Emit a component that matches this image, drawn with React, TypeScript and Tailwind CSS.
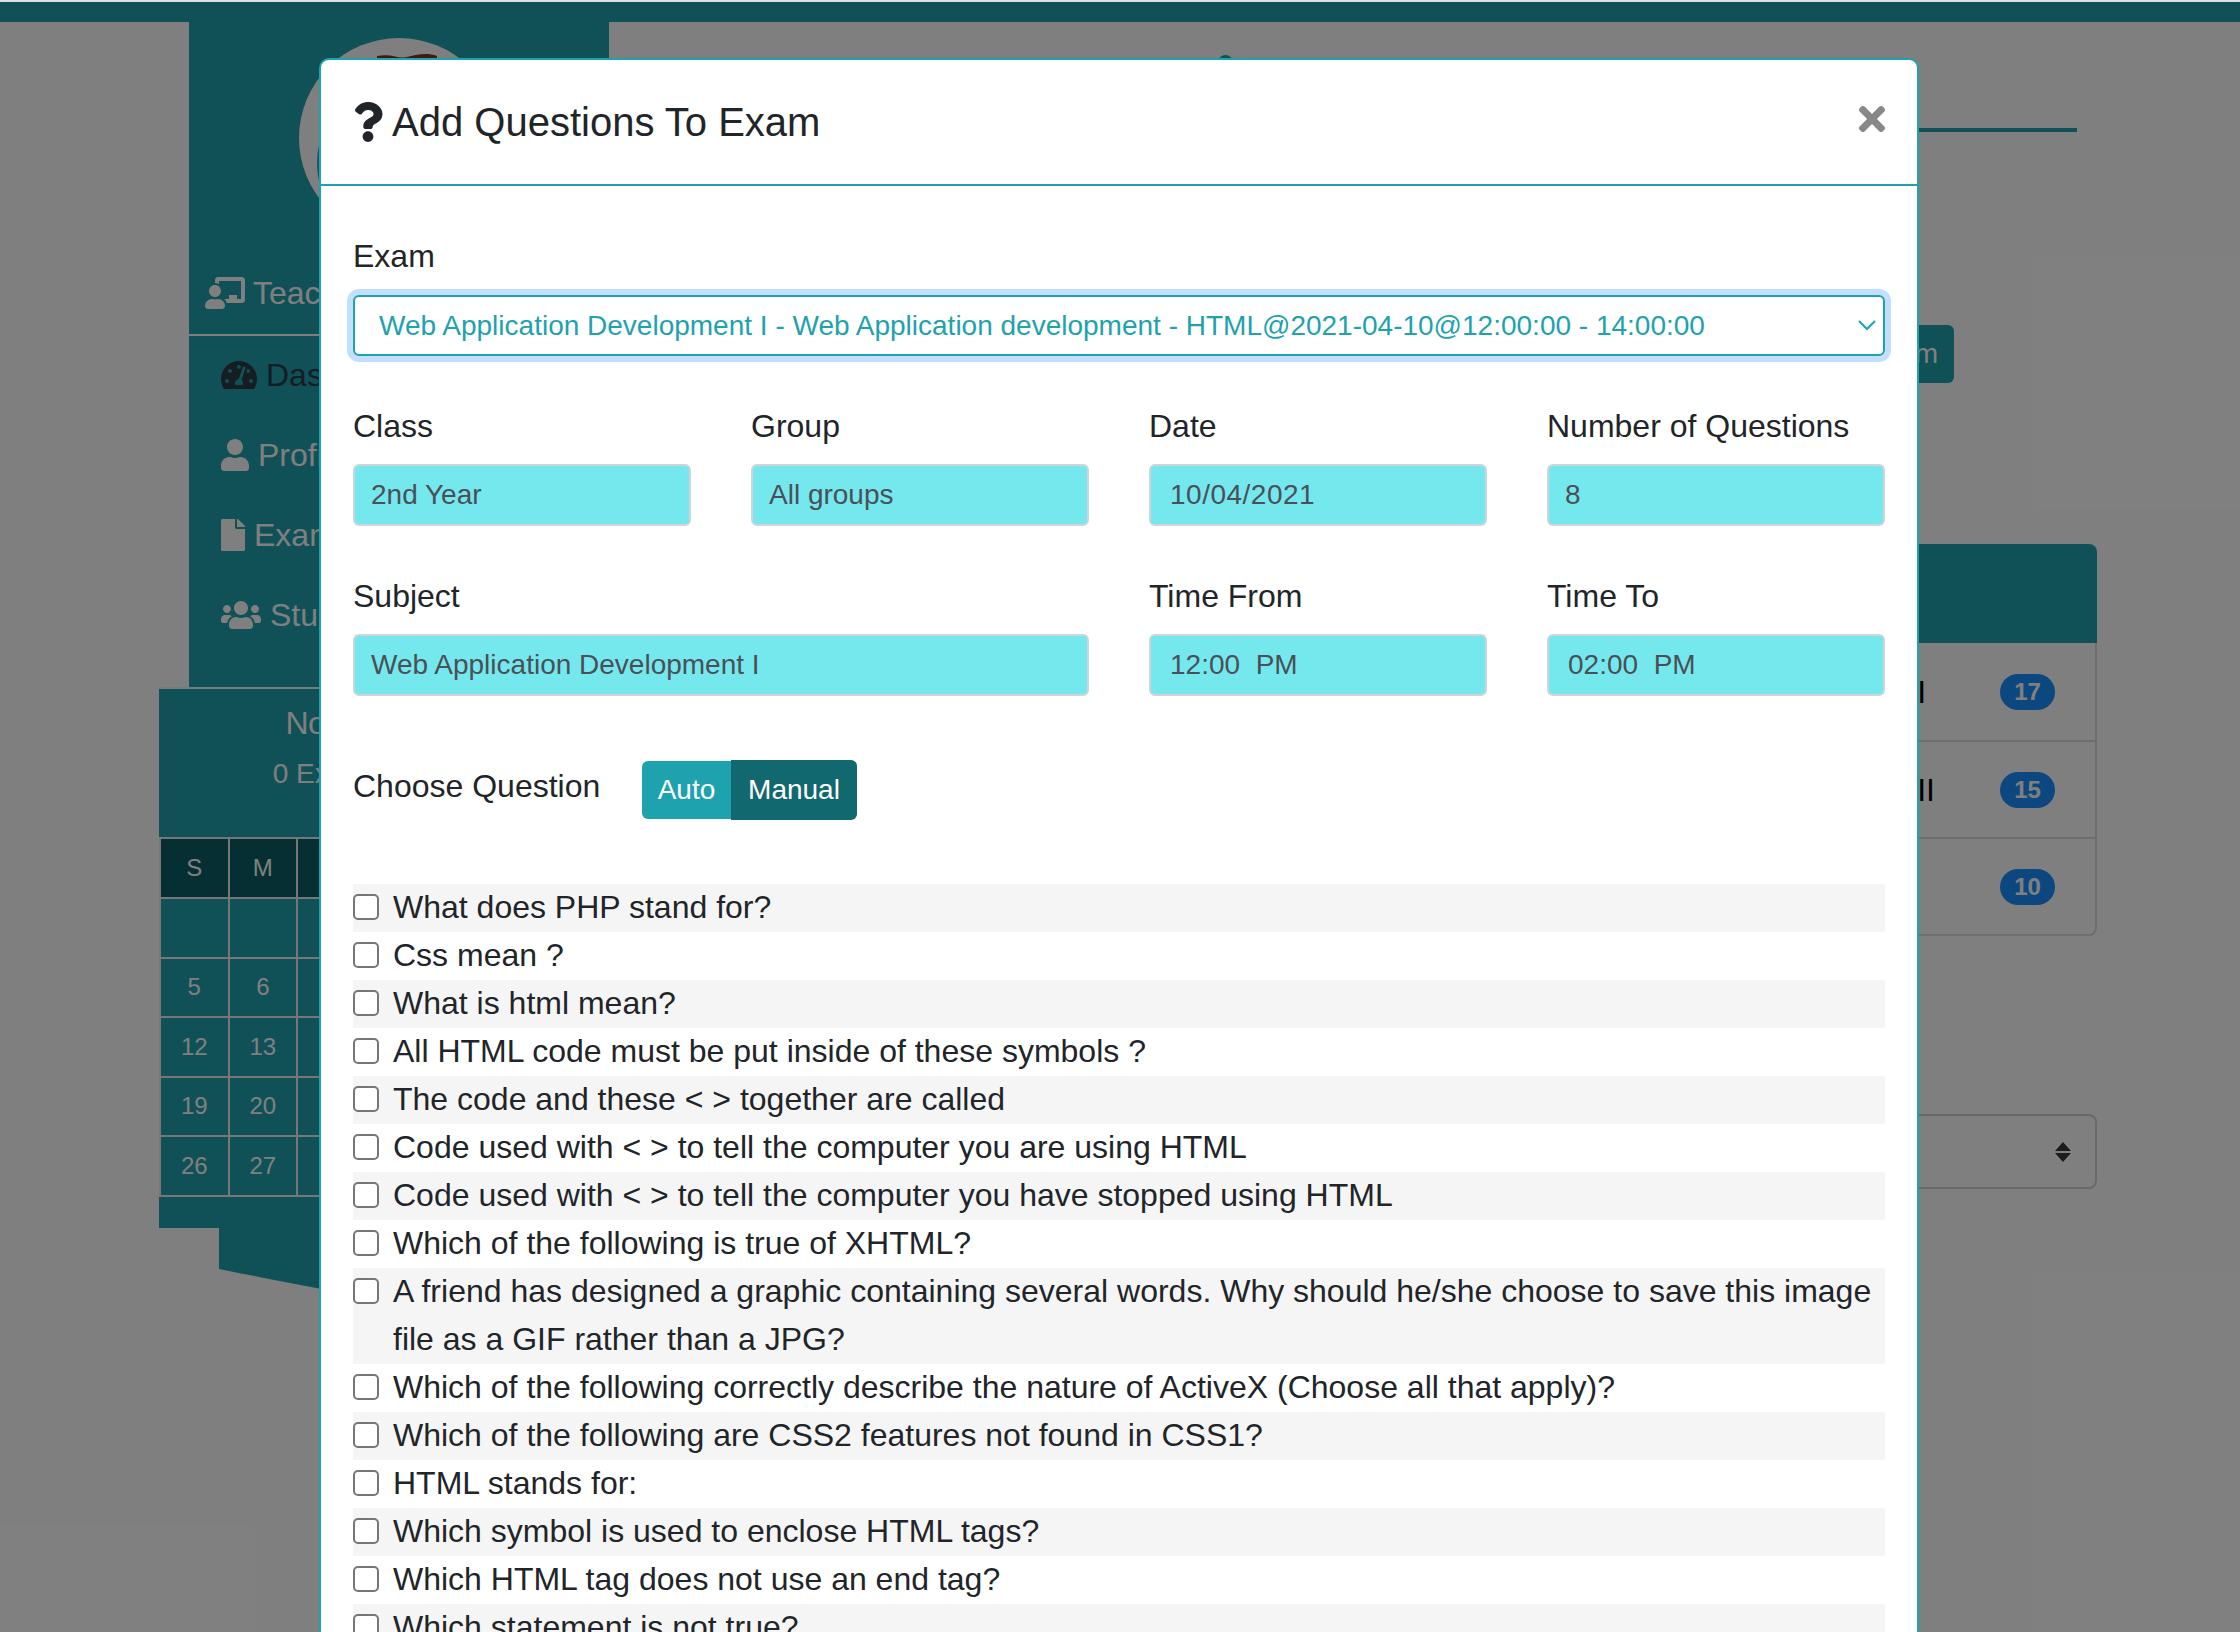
import { FaChalkboardTeacher, FaFile, FaQuestion, FaTachometerAlt, FaTimes, FaUser, FaUsers } from "react-icons/fa";

const navItems = [
  { label: "Dashboard", icon: <FaTachometerAlt className="w-[36px] h-[32px]" />, active: true },
  { label: "Profile", icon: <FaUser className="w-[28px] h-[32px]" /> },
  { label: "Exams", icon: <FaFile className="w-[24px] h-[32px]" /> },
  { label: "Students", icon: <FaUsers className="w-[40px] h-[32px]" /> },
];

const calendarRows = [
  ["", "", "", "", "1", "2", "3"],
  ["5", "6", "7", "8", "9", "10", "11"],
  ["12", "13", "14", "15", "16", "17", "18"],
  ["19", "20", "21", "22", "23", "24", "25"],
  ["26", "27", "28", "29", "30", "", ""],
];

const subjects = [
  { name: "Web Application Development I", count: 17 },
  { name: "Web Application Development II", count: 15 },
  { name: "Database", count: 10 },
];

const fieldsTop = [
  { label: "Class", value: "2nd Year" },
  { label: "Group", value: "All groups" },
  { label: "Date", value: "10/04/2021", inputClass: "pl-[19px] pr-[16px] tracking-[0.5px]" },
  { label: "Number of Questions", value: "8" },
];

const fieldsBottom = [
  { label: "Subject", value: "Web Application Development I", wide: true },
  { label: "Time From", value: "12:00  PM", inputClass: "pl-[19px] pr-[16px]" },
  { label: "Time To", value: "02:00  PM", inputClass: "pl-[19px] pr-[16px]" },
];

const questions = [
  "What does PHP stand for?",
  "Css mean ?",
  "What is html mean?",
  "All HTML code must be put inside of these symbols ?",
  "The code and these < > together are called",
  "Code used with < > to tell the computer you are using HTML",
  "Code used with < > to tell the computer you have stopped using HTML",
  "Which of the following is true of XHTML?",
  "A friend has designed a graphic containing several words. Why should he/she choose to save this image file as a GIF rather than a JPG?",
  "Which of the following correctly describe the nature of ActiveX (Choose all that apply)?",
  "Which of the following are CSS2 features not found in CSS1?",
  "HTML stands for:",
  "Which symbol is used to enclose HTML tags?",
  "Which HTML tag does not use an end tag?",
  "Which statement is not true?",
];

function Field({ label, value, wide, inputClass }: { label: string; value: string; wide?: boolean; inputClass?: string }) {
  return (
    <div className={wide ? "col-span-2" : ""}>
      <label className="block text-[32px] leading-[48px] mb-[14px] text-[#212529]">{label}</label>
      <input
        readOnly
        value={value}
        className={`block w-full h-[62px] text-[28px] whitespace-pre text-[#495057] bg-[#75e8ee] border-2 border-[#ced4da] rounded-[6px] outline-none ${
          inputClass ?? "px-[16px]"
        }`}
      />
    </div>
  );
}

function Sidebar() {
  return (
    <div className="w-[482px] shrink-0">
      <div className="ml-[30px] w-[420px] h-[665px] bg-[#1ea2ad] flex flex-col">
        <div className="pt-[16px] flex justify-center">
          <svg width="200" height="200" viewBox="0 0 200 200">
            <circle cx="100" cy="100" r="100" fill="#ffffff" />
            <circle cx="100" cy="125" r="82" fill="#4a9fd0" />
            <path d="M78 18c14-3 22 3 30 1s20-5 30-1v40H78z" fill="#7a3428" />
          </svg>
        </div>
        <div className="mt-[31px] h-[48px] pl-[16px] flex items-center gap-[8px] text-[32px] text-white">
          <FaChalkboardTeacher size={40} />
          <span>Teacher</span>
        </div>
        <div className="mt-[17px] border-t-2 border-white" />
        <div className="-mt-[1px] flex flex-col">
          {navItems.map((item) => (
            <div
              key={item.label}
              className={`h-[80px] pl-[32px] flex items-center gap-[9px] text-[32px] ${
                item.active ? "text-[#2a3a44]" : "text-white"
              }`}
            >
              {item.icon}
              <span>{item.label}</span>
            </div>
          ))}
        </div>
      </div>

      <div className="bg-[#1ea2ad] border-t-2 border-white/90 h-[541px] flex flex-col">
        <div className="h-[148px] pt-[10px] text-center text-white">
          <div className="text-[32px] leading-[48px] tracking-[-0.4px]">No Exams today</div>
          <div className="text-[28px] leading-[39px] mt-[7px]">0 Exams This Month</div>
        </div>
        <table className="w-full table-fixed border-collapse text-[24px] text-white">
          <thead>
            <tr className="h-[60px] bg-[#0c5f66]">
              {["S", "M", "T", "W", "T", "F", "S"].map((d, i) => (
                <th key={i} className="border-2 border-[#eeeeee] font-normal">
                  {d}
                </th>
              ))}
            </tr>
          </thead>
          <tbody>
            {calendarRows.map((row, i) => (
              <tr key={i} className="h-[59.5px]">
                {row.map((d, j) => (
                  <td key={j} className="border-2 border-[#eeeeee] text-center">
                    {d}
                  </td>
                ))}
              </tr>
            ))}
          </tbody>
        </table>
      </div>

      {/* curved bottom of the sidebar */}
      <svg width="390" height="100" viewBox="0 0 390 100" className="ml-[60px] block">
        <path d="M0 0H390V100C280 95 120 65 0 41Z" fill="#1ea2ad" />
      </svg>
    </div>
  );
}

function MainContent() {
  return (
    <div className="flex-1 mr-[143px] flex flex-col items-end">
      <div className="self-stretch mr-[20px] h-[110px] border-b-4 border-[#1ea2ad]">
        <div className="ml-[577px] mt-[33px] w-[15px] h-[15px] rounded-full bg-[#1ea2ad]" />
      </div>
      <button className="mt-[193px] mr-[143px] h-[58px] px-[16px] rounded-[6px] bg-[#1ea2ad] text-[28px] text-white whitespace-nowrap">
        Add Exam
      </button>
      <div className="mt-[161px] w-[651px]">
        <div className="h-[99px] rounded-t-[8px] bg-[#1ea2ad]" />
        <div className="border-x-2 border-b-2 border-[#dddddd] rounded-b-[8px]">
          {subjects.map((s, i) => (
            <div
              key={s.name}
              className={`h-[97px] pl-[34px] pr-[40px] flex items-center justify-between text-[32px] text-black ${
                i > 0 ? "border-t-2 border-[#dddddd]" : ""
              }`}
            >
              <span>{s.name}</span>
              <span className="w-[55px] h-[36px] rounded-full bg-[#1890ff] text-white text-[24px] font-bold flex items-center justify-center">
                {s.count}
              </span>
            </div>
          ))}
        </div>
      </div>
      <div className="mt-[178px] w-[651px] h-[75px] border-2 border-[#ced4da] rounded-[8px] flex items-center justify-end pr-[24px]">
        <svg width="16" height="20" viewBox="0 0 16 20" fill="#343a40">
          <path d="M0 9 8 0l8 9zM0 11l8 9 8-9z" />
        </svg>
      </div>
    </div>
  );
}

function QuestionsModal() {
  return (
    <div className="w-[1600px] ml-[319px] bg-white border-2 border-[#1ea2ad] rounded-[10px] text-[#212529]">
      <div className="h-[126px] border-b-2 border-[#1ea2ad] px-[32px] flex items-center justify-between">
        <h4 className="flex items-center gap-[4px] text-[40px] leading-[60px]">
          <FaQuestion size={40} className="shrink-0 -ml-[5px]" />
          Add Questions To Exam
        </h4>
        <FaTimes size={38} className="text-[#888888] mb-[6px] -mr-[6px]" />
      </div>

      <div className="px-[32px] pt-[46px]">
        <label className="block text-[32px] leading-[48px] mb-[15px]">Exam</label>
        <div className="relative">
          <select className="block w-full h-[61px] pl-[24px] pr-[50px] appearance-none text-[28px] text-[#1ea2ad] bg-white border-2 border-[#1ea2ad] rounded-[6px] outline-none shadow-[0_0_0_6px_#c3dfff]">
            <option>Web Application Development I - Web Application development - HTML@2021-04-10@12:00:00 - 14:00:00</option>
          </select>
          <svg
            width="18"
            height="11"
            viewBox="0 0 18 11"
            fill="none"
            stroke="#1ea2ad"
            strokeWidth="2"
            className="absolute right-[9px] top-[25px]"
          >
            <path d="M1 1l8 8 8-8" />
          </svg>
        </div>

        <div className="mt-[46px] grid grid-cols-4 gap-x-[60px] gap-y-[46px]">
          {fieldsTop.map((f) => (
            <Field key={f.label} label={f.label} value={f.value} inputClass={f.inputClass} />
          ))}
          {fieldsBottom.map((f) => (
            <Field key={f.label} label={f.label} value={f.value} wide={f.wide} inputClass={f.inputClass} />
          ))}
        </div>

        <div className="mt-[64px] flex items-start">
          <span className="mt-[2px] w-[289px] text-[32px] leading-[48px]">Choose Question</span>
          <div className="flex items-center text-[28px] text-white">
            <button className="h-[58px] w-[89px] rounded-l-[6px] bg-[#1ea2ad]">Auto</button>
            <button className="h-[60px] w-[126px] rounded-r-[6px] bg-[#12686f]">Manual</button>
          </div>
        </div>

        <ul className="mt-[64px] text-[32px] leading-[48px]">
          {questions.map((q, i) => (
            <li key={q} className={`flex ${i % 2 === 0 ? "bg-[#f5f5f5]" : ""}`}>
              <input
                type="checkbox"
                className="appearance-none shrink-0 mt-[10px] w-[26px] h-[26px] bg-white border-2 border-[#767676] rounded-[5px]"
              />
              <span className="ml-[14px] flex-1 -translate-y-px">{q}</span>
            </li>
          ))}
        </ul>
      </div>
    </div>
  );
}

export default function App() {
  return (
    <div className="relative h-[1632px] overflow-hidden bg-white font-['Liberation_Sans',Arial,sans-serif]">
      <div className="mt-[2px] h-[20px] bg-[#1ea2ad]" />
      <div className="flex pl-[159px]">
        <Sidebar />
        <MainContent />
      </div>

      {/* dimmed backdrop + dialog */}
      <div className="absolute inset-x-0 top-[2px] bottom-0 bg-black/50 pt-[56px]">
        <QuestionsModal />
      </div>
      <div className="absolute inset-x-0 top-0 h-[2px] bg-[#dde1e1]" />
    </div>
  );
}
